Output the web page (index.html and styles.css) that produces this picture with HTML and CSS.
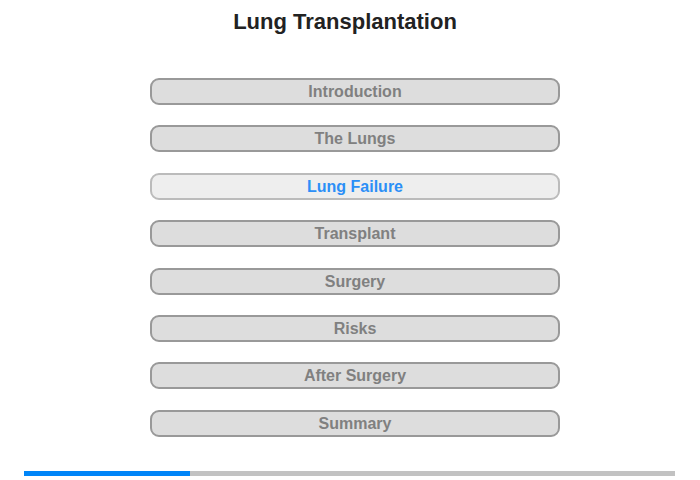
FILE: index.html
```html
<!DOCTYPE html>
<html>
<head>
<meta charset="utf-8">
<link rel="stylesheet" href="styles.css">
</head>
<body>
<div class="page">
  <h1 class="title">Lung Transplantation</h1>
  <nav class="menu">
    <div class="item">Introduction</div>
    <div class="item">The Lungs</div>
    <div class="item active">Lung Failure</div>
    <div class="item">Transplant</div>
    <div class="item">Surgery</div>
    <div class="item">Risks</div>
    <div class="item">After Surgery</div>
    <div class="item">Summary</div>
  </nav>
  <div class="progress"><div class="fill" style="width:166px"></div></div>
</div>
</body>
</html>
```
FILE: styles.css
```css
html, body { margin: 0; padding: 0; background: #fff; }
body { font-family: "Liberation Sans", Arial, sans-serif; }
.page { width: 700px; height: 480px; display: flex; flex-direction: column; align-items: flex-start; }
.title { margin: 9px 0 0 0; width: 690px; font-size: 22px; line-height: 26px; font-weight: bold; color: #222; text-align: center; }
.menu { margin: 43px 0 0 150px; display: flex; flex-direction: column; gap: 20.4px; }
.item { box-sizing: border-box; width: 410px; height: 27px; border: 2px solid #999; border-radius: 9px; background: #ddd; color: #808080; font-weight: bold; font-size: 16px; line-height: 23px; text-align: center; }
.item.active { background: #eee; border-color: #bbb; color: #2b8ff7; }
.progress { margin: 34px 0 0 24px; width: 651px; height: 5px; background: #c2c2c2; display: flex; }
.fill { height: 5px; background: #0085f8; }
```
